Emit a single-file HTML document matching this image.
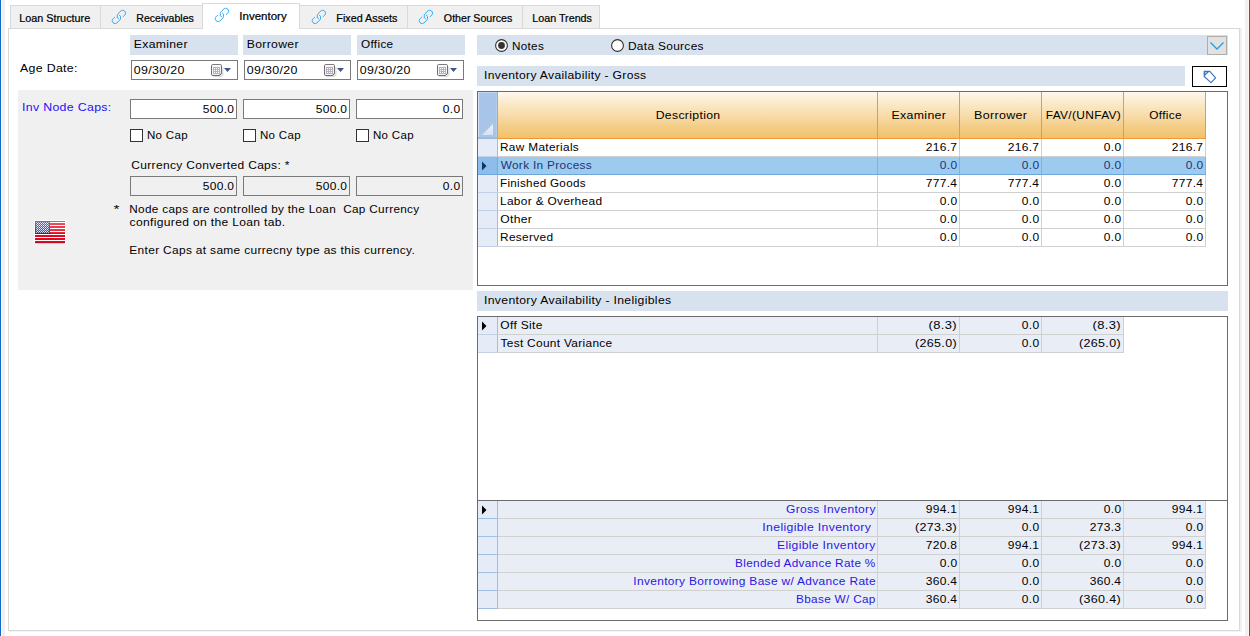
<!DOCTYPE html>
<html><head><meta charset="utf-8"><title>Inventory</title>
<style>
html,body{margin:0;padding:0}
body{width:1250px;height:636px;position:relative;overflow:hidden;background:#fff;font-family:"Liberation Sans",sans-serif;font-size:11px;color:#000}
div,span,svg{position:absolute;box-sizing:border-box}
.x{white-space:pre;font-size:11px;line-height:12px;height:12px}
.v{letter-spacing:0.3px}
.t{letter-spacing:0;-webkit-text-stroke:0.22px #000}
.n{letter-spacing:0.3px}
.band{background:#d8e2ef;height:20px}
.tab{background:#f0f0f0;border:1px solid #d9d9d9;border-bottom:none;top:5px;height:23px}
.tab.act{background:#fff;top:3px;height:26px}
.inp{background:#fff;border:1px solid #7a7a7a;width:107px;height:20px}
.inp.ro{background:#f0f0f0}
.chk{background:#fff;border:1px solid #333;width:13px;height:13px}
.grid{border:1px solid #6b6b6b;background:#fff}
.hl{height:1px;background:#d0d0d0}
.vl{width:1px;background:#d0d0d0}
#txt{left:0;top:0;width:1250px;height:636px}

</style></head>
<body>
<!-- window chrome -->
<div style="left:0;top:0;width:1px;height:636px;background:#0d6cc5"></div>
<div style="left:2px;top:0;width:3px;height:636px;background:#f0f0f0"></div>
<div style="left:1245px;top:0;width:3px;height:636px;background:#f0f0f0"></div>
<div style="left:1248px;top:0;width:1px;height:636px;background:#fdf8f0"></div>
<div style="left:1249px;top:0;width:1px;height:636px;background:#0d6cc5"></div>
<!-- tab page -->
<div style="left:1240px;top:28px;width:2px;height:604px;background:#f1f1f1"></div>
<div style="left:9px;top:631px;width:1233px;height:1px;background:#f4f4f4"></div>
<div style="left:8px;top:28px;width:1232px;height:603px;border:1px solid #d9d9d9;background:#fff"></div>
<!-- tabs -->
<div class="tab" style="left:10px;width:91px"></div>
<div class="tab" style="left:100px;width:103px"></div>
<div class="tab" style="left:299px;width:109px"></div>
<div class="tab" style="left:407px;width:116px"></div>
<div class="tab" style="left:522px;width:78px"></div>
<div class="tab act" style="left:202px;width:98px"></div>
<svg class="lnk" style="left:111px;top:9px" width="16" height="16" viewBox="0 0 16 16"><g fill="none" stroke="#12a4ff" stroke-width="0.92" stroke-linecap="round" transform="translate(7.9 7.92)">
<path d="M4.3 -0.4C5.3 -1.2 6.7 -2.4 6.7 -3.6C6.7 -5.4 5.4 -6.65 3.55 -6.65C2.9 -6.65 2.5 -6.5 2.1 -6.1L-1.2 -2.8C-1.6 -2.4 -1.6 -2 -1.6 -1.6L-1.6 0.4C-1.6 1 -1.1 1.5 -0.45 1.65"/>
<path d="M4.3 -0.4C5.3 -1.2 6.7 -2.4 6.7 -3.6C6.7 -5.4 5.4 -6.65 3.55 -6.65C2.9 -6.65 2.5 -6.5 2.1 -6.1L-1.2 -2.8C-1.6 -2.4 -1.6 -2 -1.6 -1.6L-1.6 0.4C-1.6 1 -1.1 1.5 -0.45 1.65" transform="rotate(180)"/>
</g></svg>
<svg class="lnk" style="left:214px;top:7px" width="16" height="16" viewBox="0 0 16 16"><g fill="none" stroke="#12a4ff" stroke-width="0.92" stroke-linecap="round" transform="translate(7.9 7.92)">
<path d="M4.3 -0.4C5.3 -1.2 6.7 -2.4 6.7 -3.6C6.7 -5.4 5.4 -6.65 3.55 -6.65C2.9 -6.65 2.5 -6.5 2.1 -6.1L-1.2 -2.8C-1.6 -2.4 -1.6 -2 -1.6 -1.6L-1.6 0.4C-1.6 1 -1.1 1.5 -0.45 1.65"/>
<path d="M4.3 -0.4C5.3 -1.2 6.7 -2.4 6.7 -3.6C6.7 -5.4 5.4 -6.65 3.55 -6.65C2.9 -6.65 2.5 -6.5 2.1 -6.1L-1.2 -2.8C-1.6 -2.4 -1.6 -2 -1.6 -1.6L-1.6 0.4C-1.6 1 -1.1 1.5 -0.45 1.65" transform="rotate(180)"/>
</g></svg>
<svg class="lnk" style="left:311px;top:9px" width="16" height="16" viewBox="0 0 16 16"><g fill="none" stroke="#12a4ff" stroke-width="0.92" stroke-linecap="round" transform="translate(7.9 7.92)">
<path d="M4.3 -0.4C5.3 -1.2 6.7 -2.4 6.7 -3.6C6.7 -5.4 5.4 -6.65 3.55 -6.65C2.9 -6.65 2.5 -6.5 2.1 -6.1L-1.2 -2.8C-1.6 -2.4 -1.6 -2 -1.6 -1.6L-1.6 0.4C-1.6 1 -1.1 1.5 -0.45 1.65"/>
<path d="M4.3 -0.4C5.3 -1.2 6.7 -2.4 6.7 -3.6C6.7 -5.4 5.4 -6.65 3.55 -6.65C2.9 -6.65 2.5 -6.5 2.1 -6.1L-1.2 -2.8C-1.6 -2.4 -1.6 -2 -1.6 -1.6L-1.6 0.4C-1.6 1 -1.1 1.5 -0.45 1.65" transform="rotate(180)"/>
</g></svg>
<svg class="lnk" style="left:418px;top:9px" width="16" height="16" viewBox="0 0 16 16"><g fill="none" stroke="#12a4ff" stroke-width="0.92" stroke-linecap="round" transform="translate(7.9 7.92)">
<path d="M4.3 -0.4C5.3 -1.2 6.7 -2.4 6.7 -3.6C6.7 -5.4 5.4 -6.65 3.55 -6.65C2.9 -6.65 2.5 -6.5 2.1 -6.1L-1.2 -2.8C-1.6 -2.4 -1.6 -2 -1.6 -1.6L-1.6 0.4C-1.6 1 -1.1 1.5 -0.45 1.65"/>
<path d="M4.3 -0.4C5.3 -1.2 6.7 -2.4 6.7 -3.6C6.7 -5.4 5.4 -6.65 3.55 -6.65C2.9 -6.65 2.5 -6.5 2.1 -6.1L-1.2 -2.8C-1.6 -2.4 -1.6 -2 -1.6 -1.6L-1.6 0.4C-1.6 1 -1.1 1.5 -0.45 1.65" transform="rotate(180)"/>
</g></svg>

<!-- left header bands -->
<div class="band" style="left:130px;top:35px;width:108px"></div>
<div class="band" style="left:243px;top:35px;width:108px"></div>
<div class="band" style="left:357px;top:35px;width:108px"></div>
<!-- date inputs -->
<div class="inp" style="left:131px;top:60px"></div>
<div class="inp" style="left:244px;top:60px"></div>
<div class="inp" style="left:357px;top:60px"></div>
<svg style="left:210px;top:63px" width="22" height="14" viewBox="0 0 22 14"><g>
<path d="M3 13.3h8.3l1.6-1.6V4" fill="none" stroke="#bdbdbd" stroke-width="1.2" opacity=".55"/>
<path d="M2.8 1.5h7.4q1.3 0 1.3 1.3v7.9l-1.8 1.8h-6.9q-1.3 0-1.3-1.3v-8.4q0-1.3 1.3-1.3z" fill="#f0f5fd" stroke="#746a68" stroke-width="1"/>
<path d="M2.3 2.4h8.4" stroke="#fff" stroke-width="0.9"/>
<path d="M11.5 10.7l-1.8 1.8v-1.1q0-.7 .7-.7z" fill="#5e5654"/>
<rect x="3" y="4" width="7" height="7" fill="#b3b4bc"/>
<g fill="#fff"><rect x="4" y="5" width="1" height="1"/><rect x="6" y="5" width="1" height="1"/><rect x="8" y="5" width="1" height="1"/><rect x="4" y="7" width="1" height="1"/><rect x="6" y="7" width="1" height="1"/><rect x="8" y="7" width="1" height="1"/><rect x="4" y="9" width="1" height="1"/><rect x="6" y="9" width="1" height="1"/><rect x="8" y="9" width="1" height="1"/></g>
<path d="M14 5h7l-3.5 4z" fill="#3f5686"/>
</g></svg>
<svg style="left:323px;top:63px" width="22" height="14" viewBox="0 0 22 14"><g>
<path d="M3 13.3h8.3l1.6-1.6V4" fill="none" stroke="#bdbdbd" stroke-width="1.2" opacity=".55"/>
<path d="M2.8 1.5h7.4q1.3 0 1.3 1.3v7.9l-1.8 1.8h-6.9q-1.3 0-1.3-1.3v-8.4q0-1.3 1.3-1.3z" fill="#f0f5fd" stroke="#746a68" stroke-width="1"/>
<path d="M2.3 2.4h8.4" stroke="#fff" stroke-width="0.9"/>
<path d="M11.5 10.7l-1.8 1.8v-1.1q0-.7 .7-.7z" fill="#5e5654"/>
<rect x="3" y="4" width="7" height="7" fill="#b3b4bc"/>
<g fill="#fff"><rect x="4" y="5" width="1" height="1"/><rect x="6" y="5" width="1" height="1"/><rect x="8" y="5" width="1" height="1"/><rect x="4" y="7" width="1" height="1"/><rect x="6" y="7" width="1" height="1"/><rect x="8" y="7" width="1" height="1"/><rect x="4" y="9" width="1" height="1"/><rect x="6" y="9" width="1" height="1"/><rect x="8" y="9" width="1" height="1"/></g>
<path d="M14 5h7l-3.5 4z" fill="#3f5686"/>
</g></svg>
<svg style="left:436px;top:63px" width="22" height="14" viewBox="0 0 22 14"><g>
<path d="M3 13.3h8.3l1.6-1.6V4" fill="none" stroke="#bdbdbd" stroke-width="1.2" opacity=".55"/>
<path d="M2.8 1.5h7.4q1.3 0 1.3 1.3v7.9l-1.8 1.8h-6.9q-1.3 0-1.3-1.3v-8.4q0-1.3 1.3-1.3z" fill="#f0f5fd" stroke="#746a68" stroke-width="1"/>
<path d="M2.3 2.4h8.4" stroke="#fff" stroke-width="0.9"/>
<path d="M11.5 10.7l-1.8 1.8v-1.1q0-.7 .7-.7z" fill="#5e5654"/>
<rect x="3" y="4" width="7" height="7" fill="#b3b4bc"/>
<g fill="#fff"><rect x="4" y="5" width="1" height="1"/><rect x="6" y="5" width="1" height="1"/><rect x="8" y="5" width="1" height="1"/><rect x="4" y="7" width="1" height="1"/><rect x="6" y="7" width="1" height="1"/><rect x="8" y="7" width="1" height="1"/><rect x="4" y="9" width="1" height="1"/><rect x="6" y="9" width="1" height="1"/><rect x="8" y="9" width="1" height="1"/></g>
<path d="M14 5h7l-3.5 4z" fill="#3f5686"/>
</g></svg>

<!-- gray panel -->
<div style="left:18px;top:90px;width:455px;height:200px;background:#f0f0f0"></div>
<div class="inp" style="left:130px;top:99px"></div>
<div class="inp" style="left:243px;top:99px"></div>
<div class="inp" style="left:356px;top:99px"></div>
<div class="chk" style="left:130px;top:129px"></div>
<div class="chk" style="left:243px;top:129px"></div>
<div class="chk" style="left:356px;top:129px"></div>
<div class="inp ro" style="left:130px;top:176px"></div>
<div class="inp ro" style="left:243px;top:176px"></div>
<div class="inp ro" style="left:356px;top:176px"></div>
<!-- flag -->
<svg style="left:33px;top:219px" width="34" height="27" viewBox="0 0 34 27">
<defs><pattern id="st" width="2" height="2" patternUnits="userSpaceOnUse"><rect width="2" height="2" fill="#2a3080"/><rect x="0" y="0" width="1" height="1" fill="#eceef8"/><rect x="1" y="1" width="1" height="1" fill="#b4b9dc"/></pattern>
<linearGradient id="fg" x1="0" y1="0" x2="0" y2="1"><stop offset="0" stop-color="#fff" stop-opacity=".32"/><stop offset="1" stop-color="#fff" stop-opacity=".12"/></linearGradient></defs>
<rect x="1" y="1" width="32" height="24.4" rx="1.2" fill="#fff" opacity=".85"/>
<rect x="2" y="24" width="30" height="1.2" fill="#9a9a9a" opacity=".45"/>
<rect x="2" y="2" width="30" height="22" fill="#fff"/>
<g fill="#df0a20"><rect x="2" y="2" width="30" height="1"/><rect x="2" y="4" width="30" height="2"/><rect x="2" y="7" width="30" height="2"/><rect x="2" y="10" width="30" height="2"/><rect x="2" y="13" width="30" height="2"/><rect x="2" y="16" width="30" height="2"/><rect x="2" y="19" width="30" height="2"/><rect x="2" y="22" width="30" height="2"/></g>
<rect x="2" y="2" width="15" height="13" fill="#2a3080"/>
<rect x="3" y="3" width="13" height="11" fill="url(#st)"/>
<rect x="2" y="2" width="30" height="12" fill="url(#fg)"/>
<rect x="2" y="23" width="30" height="1" fill="#000" opacity=".1"/>
</svg>
<!-- right panel -->
<div class="band" style="left:477px;top:35px;width:751px"></div>
<div style="left:1207px;top:36px;width:20px;height:19px;background:#e1e1e1;border:1px solid #adadad"></div>
<svg style="left:1207px;top:36px" width="20" height="19" viewBox="0 0 20 19"><path d="M3.5 6.5L10 13L16.5 6.5" fill="none" stroke="#1ba1e8" stroke-width="1.3"/></svg>
<svg style="left:495px;top:39px" width="13" height="13" viewBox="0 0 13 13"><circle cx="6.5" cy="6.5" r="5.9" fill="#fff" stroke="#303030" stroke-width="1.12"/><circle cx="6.5" cy="6.5" r="3.4" fill="#333"/></svg>
<svg style="left:611px;top:39px" width="13" height="13" viewBox="0 0 13 13"><circle cx="6.5" cy="6.5" r="5.9" fill="#fff" stroke="#303030" stroke-width="1.12"/></svg>
<div class="band" style="left:477px;top:66px;width:708px"></div>
<div style="left:1192px;top:66px;width:35px;height:21px;background:#fff;border:1px solid #000"></div>
<svg style="left:1201px;top:69px" width="18" height="16" viewBox="0 0 18 16"><path d="M3.2 2.3L8.8 2.3L14.6 8.8L10 13.7L3.2 7.5z" fill="#fff" stroke="#3a76be" stroke-width="1.15" stroke-linejoin="round"/><path d="M3.2 2.3L8.8 2.3L3.2 7.5z" fill="#3a76be"/><circle cx="4.9" cy="3.8" r="0.75" fill="#e8f0fa"/></svg>
<div class="band" style="left:477px;top:291px;width:751px"></div>
<div class="grid" style="left:477px;top:91px;width:751px;height:195px"></div>
<div style="left:498px;top:92px;width:708px;height:46px;background:linear-gradient(#fef8ee 0%,#fbe9c9 25%,#f8dcab 50%,#f4ce88 75%,#f0c168 100%)"></div>
<div style="left:498px;top:138px;width:708px;height:1px;background:#f29638"></div>
<div style="left:877px;top:92px;width:1px;height:47px;background:#f29638"></div>
<div style="left:959px;top:92px;width:1px;height:47px;background:#f29638"></div>
<div style="left:1041px;top:92px;width:1px;height:47px;background:#f29638"></div>
<div style="left:1123px;top:92px;width:1px;height:47px;background:#f29638"></div>
<div style="left:1205px;top:92px;width:1px;height:47px;background:#f29638"></div>
<div style="left:478px;top:92px;width:20px;height:47px;background:#a9c4e9"></div>
<div style="left:478px;top:92px;width:1px;height:46px;background:#d3e1f5"></div>
<div style="left:479px;top:92px;width:17px;height:1px;background:#c4d6f0"></div>
<div style="left:496px;top:92px;width:1px;height:46px;background:#b4cbe9"></div>
<div style="left:497px;top:92px;width:1px;height:47px;background:#8fafd6"></div>
<div style="left:478px;top:137px;width:19px;height:1px;background:#a6bedb"></div>
<div style="left:478px;top:138px;width:20px;height:1px;background:#9db6d5"></div>
<svg style="left:482px;top:124px" width="12" height="12" viewBox="0 0 12 12"><defs><linearGradient id="tg" x1="0" y1="0" x2="0" y2="1"><stop offset="0" stop-color="#eef3fb"/><stop offset="1" stop-color="#d4e1f4"/></linearGradient></defs><path d="M0 11L11 11L11 0z" fill="url(#tg)"/></svg>
<div style="left:478px;top:139px;width:19px;height:17px;background:#e6ecf7"></div>
<div style="left:497px;top:139px;width:1px;height:18px;background:#a3bcdc"></div>
<div style="left:478px;top:156px;width:20px;height:1px;background:#c3cfe2"></div>
<div style="left:498px;top:156px;width:708px;height:1px;background:#d4cfcf"></div>
<div style="left:877px;top:139px;width:1px;height:17px;background:#d0d0d0"></div>
<div style="left:959px;top:139px;width:1px;height:17px;background:#d0d0d0"></div>
<div style="left:1041px;top:139px;width:1px;height:17px;background:#d0d0d0"></div>
<div style="left:1123px;top:139px;width:1px;height:17px;background:#d0d0d0"></div>
<div style="left:1205px;top:139px;width:1px;height:17px;background:#d0d0d0"></div>
<div style="left:478px;top:157px;width:19px;height:17px;background:#8dbdea"></div>
<div style="left:497px;top:157px;width:1px;height:18px;background:#7aa8d8"></div>
<div style="left:498px;top:157px;width:708px;height:17px;background:#9dcbef"></div>
<div style="left:478px;top:174px;width:20px;height:1px;background:#6ea6dc"></div>
<div style="left:498px;top:174px;width:708px;height:1px;background:#6ea6dc"></div>
<div style="left:877px;top:157px;width:1px;height:17px;background:#7fb0de"></div>
<div style="left:959px;top:157px;width:1px;height:17px;background:#7fb0de"></div>
<div style="left:1041px;top:157px;width:1px;height:17px;background:#7fb0de"></div>
<div style="left:1123px;top:157px;width:1px;height:17px;background:#7fb0de"></div>
<div style="left:1205px;top:157px;width:1px;height:17px;background:#7fb0de"></div>
<div style="left:478px;top:175px;width:19px;height:17px;background:#e6ecf7"></div>
<div style="left:497px;top:175px;width:1px;height:18px;background:#a3bcdc"></div>
<div style="left:478px;top:192px;width:20px;height:1px;background:#c3cfe2"></div>
<div style="left:498px;top:192px;width:708px;height:1px;background:#d0d0d0"></div>
<div style="left:877px;top:175px;width:1px;height:17px;background:#d0d0d0"></div>
<div style="left:959px;top:175px;width:1px;height:17px;background:#d0d0d0"></div>
<div style="left:1041px;top:175px;width:1px;height:17px;background:#d0d0d0"></div>
<div style="left:1123px;top:175px;width:1px;height:17px;background:#d0d0d0"></div>
<div style="left:1205px;top:175px;width:1px;height:17px;background:#d0d0d0"></div>
<div style="left:478px;top:193px;width:19px;height:17px;background:#e6ecf7"></div>
<div style="left:497px;top:193px;width:1px;height:18px;background:#a3bcdc"></div>
<div style="left:478px;top:210px;width:20px;height:1px;background:#c3cfe2"></div>
<div style="left:498px;top:210px;width:708px;height:1px;background:#d0d0d0"></div>
<div style="left:877px;top:193px;width:1px;height:17px;background:#d0d0d0"></div>
<div style="left:959px;top:193px;width:1px;height:17px;background:#d0d0d0"></div>
<div style="left:1041px;top:193px;width:1px;height:17px;background:#d0d0d0"></div>
<div style="left:1123px;top:193px;width:1px;height:17px;background:#d0d0d0"></div>
<div style="left:1205px;top:193px;width:1px;height:17px;background:#d0d0d0"></div>
<div style="left:478px;top:211px;width:19px;height:17px;background:#e6ecf7"></div>
<div style="left:497px;top:211px;width:1px;height:18px;background:#a3bcdc"></div>
<div style="left:478px;top:228px;width:20px;height:1px;background:#c3cfe2"></div>
<div style="left:498px;top:228px;width:708px;height:1px;background:#d0d0d0"></div>
<div style="left:877px;top:211px;width:1px;height:17px;background:#d0d0d0"></div>
<div style="left:959px;top:211px;width:1px;height:17px;background:#d0d0d0"></div>
<div style="left:1041px;top:211px;width:1px;height:17px;background:#d0d0d0"></div>
<div style="left:1123px;top:211px;width:1px;height:17px;background:#d0d0d0"></div>
<div style="left:1205px;top:211px;width:1px;height:17px;background:#d0d0d0"></div>
<div style="left:478px;top:229px;width:19px;height:17px;background:#e6ecf7"></div>
<div style="left:497px;top:229px;width:1px;height:18px;background:#a3bcdc"></div>
<div style="left:478px;top:246px;width:20px;height:1px;background:#c3cfe2"></div>
<div style="left:498px;top:246px;width:708px;height:1px;background:#d0d0d0"></div>
<div style="left:877px;top:229px;width:1px;height:17px;background:#d0d0d0"></div>
<div style="left:959px;top:229px;width:1px;height:17px;background:#d0d0d0"></div>
<div style="left:1041px;top:229px;width:1px;height:17px;background:#d0d0d0"></div>
<div style="left:1123px;top:229px;width:1px;height:17px;background:#d0d0d0"></div>
<div style="left:1205px;top:229px;width:1px;height:17px;background:#d0d0d0"></div>
<svg style="left:482px;top:161px" width="6" height="10" viewBox="0 0 6 10"><path d="M0 0.5L4.5 5L0 9.5z" fill="#0b3766"/></svg>
<div class="grid" style="left:477px;top:316px;width:751px;height:305px"></div>
<div style="left:478px;top:317px;width:19px;height:17px;background:#e6ecf7"></div>
<div style="left:497px;top:317px;width:1px;height:18px;background:#a3bcdc"></div>
<div style="left:498px;top:317px;width:626px;height:17px;background:#e9edf6"></div>
<div style="left:478px;top:334px;width:20px;height:1px;background:#c3cfe2"></div>
<div style="left:498px;top:334px;width:626px;height:1px;background:#d0d0d0"></div>
<div style="left:877px;top:317px;width:1px;height:17px;background:#d0d0d0"></div>
<div style="left:959px;top:317px;width:1px;height:17px;background:#d0d0d0"></div>
<div style="left:1041px;top:317px;width:1px;height:17px;background:#d0d0d0"></div>
<div style="left:1123px;top:317px;width:1px;height:17px;background:#d0d0d0"></div>
<div style="left:478px;top:335px;width:19px;height:17px;background:#e6ecf7"></div>
<div style="left:497px;top:335px;width:1px;height:18px;background:#a3bcdc"></div>
<div style="left:498px;top:335px;width:626px;height:17px;background:#e9edf6"></div>
<div style="left:478px;top:352px;width:20px;height:1px;background:#c3cfe2"></div>
<div style="left:498px;top:352px;width:626px;height:1px;background:#d0d0d0"></div>
<div style="left:877px;top:335px;width:1px;height:17px;background:#d0d0d0"></div>
<div style="left:959px;top:335px;width:1px;height:17px;background:#d0d0d0"></div>
<div style="left:1041px;top:335px;width:1px;height:17px;background:#d0d0d0"></div>
<div style="left:1123px;top:335px;width:1px;height:17px;background:#d0d0d0"></div>
<svg style="left:482px;top:321px" width="6" height="10" viewBox="0 0 6 10"><path d="M0 0.5L4.5 5L0 9.5z" fill="#000"/></svg>
<div style="left:478px;top:500px;width:749px;height:1px;background:#6b6b6b"></div>
<div style="left:478px;top:501px;width:19px;height:17px;background:#e6ecf7"></div>
<div style="left:497px;top:501px;width:1px;height:18px;background:#a3bcdc"></div>
<div style="left:498px;top:501px;width:708px;height:17px;background:#e9edf6"></div>
<div style="left:478px;top:518px;width:20px;height:1px;background:#9fc0e4"></div>
<div style="left:498px;top:518px;width:708px;height:1px;background:#d0d0d0"></div>
<div style="left:877px;top:501px;width:1px;height:17px;background:#d0d0d0"></div>
<div style="left:959px;top:501px;width:1px;height:17px;background:#d0d0d0"></div>
<div style="left:1041px;top:501px;width:1px;height:17px;background:#d0d0d0"></div>
<div style="left:1123px;top:501px;width:1px;height:17px;background:#d0d0d0"></div>
<div style="left:1205px;top:501px;width:1px;height:17px;background:#d0d0d0"></div>
<div style="left:478px;top:519px;width:19px;height:17px;background:#e6ecf7"></div>
<div style="left:497px;top:519px;width:1px;height:18px;background:#a3bcdc"></div>
<div style="left:498px;top:519px;width:708px;height:17px;background:#e9edf6"></div>
<div style="left:478px;top:536px;width:20px;height:1px;background:#9fc0e4"></div>
<div style="left:498px;top:536px;width:708px;height:1px;background:#d0d0d0"></div>
<div style="left:877px;top:519px;width:1px;height:17px;background:#d0d0d0"></div>
<div style="left:959px;top:519px;width:1px;height:17px;background:#d0d0d0"></div>
<div style="left:1041px;top:519px;width:1px;height:17px;background:#d0d0d0"></div>
<div style="left:1123px;top:519px;width:1px;height:17px;background:#d0d0d0"></div>
<div style="left:1205px;top:519px;width:1px;height:17px;background:#d0d0d0"></div>
<div style="left:478px;top:537px;width:19px;height:17px;background:#e6ecf7"></div>
<div style="left:497px;top:537px;width:1px;height:18px;background:#a3bcdc"></div>
<div style="left:498px;top:537px;width:708px;height:17px;background:#e9edf6"></div>
<div style="left:478px;top:554px;width:20px;height:1px;background:#9fc0e4"></div>
<div style="left:498px;top:554px;width:708px;height:1px;background:#d0d0d0"></div>
<div style="left:877px;top:537px;width:1px;height:17px;background:#d0d0d0"></div>
<div style="left:959px;top:537px;width:1px;height:17px;background:#d0d0d0"></div>
<div style="left:1041px;top:537px;width:1px;height:17px;background:#d0d0d0"></div>
<div style="left:1123px;top:537px;width:1px;height:17px;background:#d0d0d0"></div>
<div style="left:1205px;top:537px;width:1px;height:17px;background:#d0d0d0"></div>
<div style="left:478px;top:555px;width:19px;height:17px;background:#e6ecf7"></div>
<div style="left:497px;top:555px;width:1px;height:18px;background:#a3bcdc"></div>
<div style="left:498px;top:555px;width:708px;height:17px;background:#e9edf6"></div>
<div style="left:478px;top:572px;width:20px;height:1px;background:#9fc0e4"></div>
<div style="left:498px;top:572px;width:708px;height:1px;background:#d0d0d0"></div>
<div style="left:877px;top:555px;width:1px;height:17px;background:#d0d0d0"></div>
<div style="left:959px;top:555px;width:1px;height:17px;background:#d0d0d0"></div>
<div style="left:1041px;top:555px;width:1px;height:17px;background:#d0d0d0"></div>
<div style="left:1123px;top:555px;width:1px;height:17px;background:#d0d0d0"></div>
<div style="left:1205px;top:555px;width:1px;height:17px;background:#d0d0d0"></div>
<div style="left:478px;top:573px;width:19px;height:17px;background:#e6ecf7"></div>
<div style="left:497px;top:573px;width:1px;height:18px;background:#a3bcdc"></div>
<div style="left:498px;top:573px;width:708px;height:17px;background:#e9edf6"></div>
<div style="left:478px;top:590px;width:20px;height:1px;background:#9fc0e4"></div>
<div style="left:498px;top:590px;width:708px;height:1px;background:#d0d0d0"></div>
<div style="left:877px;top:573px;width:1px;height:17px;background:#d0d0d0"></div>
<div style="left:959px;top:573px;width:1px;height:17px;background:#d0d0d0"></div>
<div style="left:1041px;top:573px;width:1px;height:17px;background:#d0d0d0"></div>
<div style="left:1123px;top:573px;width:1px;height:17px;background:#d0d0d0"></div>
<div style="left:1205px;top:573px;width:1px;height:17px;background:#d0d0d0"></div>
<div style="left:478px;top:591px;width:19px;height:17px;background:#e6ecf7"></div>
<div style="left:497px;top:591px;width:1px;height:18px;background:#a3bcdc"></div>
<div style="left:498px;top:591px;width:708px;height:17px;background:#e9edf6"></div>
<div style="left:478px;top:608px;width:20px;height:1px;background:#9fc0e4"></div>
<div style="left:498px;top:608px;width:708px;height:1px;background:#d0d0d0"></div>
<div style="left:877px;top:591px;width:1px;height:17px;background:#d0d0d0"></div>
<div style="left:959px;top:591px;width:1px;height:17px;background:#d0d0d0"></div>
<div style="left:1041px;top:591px;width:1px;height:17px;background:#d0d0d0"></div>
<div style="left:1123px;top:591px;width:1px;height:17px;background:#d0d0d0"></div>
<div style="left:1205px;top:591px;width:1px;height:17px;background:#d0d0d0"></div>
<svg style="left:482px;top:505px" width="6" height="10" viewBox="0 0 6 10"><path d="M0 0.5L4.5 5L0 9.5z" fill="#000"/></svg>
<div id="txt">
<span class="x t" style="left:19px;top:12px;transform:translateX(0.3px) scaleX(0.9817);transform-origin:0 0">Loan Structure</span>
<span class="x t" style="left:136px;top:12px;transform:translateX(0.3px) scaleX(0.9597);transform-origin:0 0">Receivables</span>
<span class="x t" style="left:239px;top:10px;transform:translateX(0.27px) scaleX(1.0473);transform-origin:0 0">Inventory</span>
<span class="x t" style="left:336px;top:12px;transform:translateX(0.3px) scaleX(0.9812);transform-origin:0 0">Fixed Assets</span>
<span class="x t" style="left:443px;top:12px;transform:translateX(0.87px) scaleX(0.9652);transform-origin:0 0">Other Sources</span>
<span class="x t" style="left:532px;top:12px;transform:translateX(0.3px) scaleX(0.975);transform-origin:0 0">Loan Trends</span>
<span class="x v" style="left:133px;top:38px;transform:translateX(0.77px) scaleX(1.1066);transform-origin:0 0">Examiner</span>
<span class="x v" style="left:246px;top:38px;transform:translateX(0.68px) scaleX(1.1082);transform-origin:0 0">Borrower</span>
<span class="x v" style="left:361px;top:38px;transform:scaleX(1.0711);transform-origin:0 0">Office</span>
<span class="x v" style="left:20px;top:62px;transform:scaleX(1.12);transform-origin:0 0">Age Date:</span>
<span class="x v" style="left:133px;top:64px;transform:translateX(0.76px) scaleX(1.1275);transform-origin:0 0">09/30/20</span>
<span class="x v" style="left:246px;top:64px;transform:translateX(0.76px) scaleX(1.1275);transform-origin:0 0">09/30/20</span>
<span class="x v" style="left:359px;top:64px;transform:translateX(0.76px) scaleX(1.1275);transform-origin:0 0">09/30/20</span>
<span class="x v" style="left:22px;top:101px;transform:scaleX(1.12);transform-origin:0 0;color:#2410fa">Inv Node Caps:</span>
<span class="x n" style="right:1016px;top:103px;transform:translateX(0.33px) scaleX(1.09);transform-origin:100% 0">500.0</span>
<span class="x n" style="right:1016px;top:180px;transform:translateX(0.33px) scaleX(1.09);transform-origin:100% 0">500.0</span>
<span class="x n" style="right:903px;top:103px;transform:translateX(0.33px) scaleX(1.09);transform-origin:100% 0">500.0</span>
<span class="x n" style="right:903px;top:180px;transform:translateX(0.33px) scaleX(1.09);transform-origin:100% 0">500.0</span>
<span class="x n" style="right:790px;top:103px;transform:translateX(0.33px) scaleX(1.09);transform-origin:100% 0">0.0</span>
<span class="x n" style="right:790px;top:180px;transform:translateX(0.33px) scaleX(1.09);transform-origin:100% 0">0.0</span>
<span class="x v" style="left:146px;top:129px;transform:translateX(0.97px) scaleX(1.0475);transform-origin:0 0">No Cap</span>
<span class="x v" style="left:259px;top:129px;transform:translateX(0.97px) scaleX(1.0475);transform-origin:0 0">No Cap</span>
<span class="x v" style="left:372px;top:129px;transform:translateX(0.97px) scaleX(1.0475);transform-origin:0 0">No Cap</span>
<span class="x v" style="left:131px;top:159px;transform:translateX(0.32px) scaleX(1.0899);transform-origin:0 0">Currency Converted Caps: *</span>
<span class="x v" style="left:113px;top:203px;transform:translateX(0.5px) scaleX(1.3912);transform-origin:0 0">*</span>
<span class="x v" style="left:129px;top:203px;transform:translateX(0.3px) scaleX(1.0676);transform-origin:0 0">Node caps are controlled by the Loan  Cap Currency</span>
<span class="x v" style="left:129px;top:216px;transform:translateX(0.6px) scaleX(1.0977);transform-origin:0 0">configured on the Loan tab.</span>
<span class="x v" style="left:129px;top:244px;transform:translateX(0.3px) scaleX(1.0843);transform-origin:0 0">Enter Caps at same currecny type as this currency.</span>
<span class="x v" style="left:511px;top:40px;transform:translateX(0.91px) scaleX(1.0635);transform-origin:0 0">Notes</span>
<span class="x v" style="left:627px;top:40px;transform:translateX(0.91px) scaleX(1.0808);transform-origin:0 0">Data Sources</span>
<span class="x v" style="left:484px;top:69px;transform:scaleX(1.101);transform-origin:0 0">Inventory Availability - Gross</span>
<span class="x v" style="left:484px;top:294px;transform:scaleX(1.1094);transform-origin:0 0">Inventory Availability - Ineligibles</span>
<span class="x v" style="left:655px;top:109px;transform:translateX(0.69px) scaleX(1.1108);transform-origin:0 0">Description</span>
<span class="x v" style="left:891px;top:109px;transform:translateX(0.5px) scaleX(1.12);transform-origin:0 0">Examiner</span>
<span class="x v" style="left:974px;top:109px;transform:scaleX(1.132);transform-origin:0 0">Borrower</span>
<span class="x v" style="left:1045px;top:109px;transform:translateX(0.68px) scaleX(1.0854);transform-origin:0 0">FAV/(UNFAV)</span>
<span class="x v" style="left:1149px;top:109px;transform:translateX(0.26px) scaleX(1.0778);transform-origin:0 0">Office</span>
<span class="x v" style="left:500px;top:141px;transform:scaleX(1.0744);transform-origin:0 0">Raw Materials</span>
<span class="x n" style="right:293px;top:141px;transform:translateX(0.33px) scaleX(1.09);transform-origin:100% 0">216.7</span>
<span class="x n" style="right:211px;top:141px;transform:translateX(0.33px) scaleX(1.09);transform-origin:100% 0">216.7</span>
<span class="x n" style="right:129px;top:141px;transform:translateX(0.33px) scaleX(1.09);transform-origin:100% 0">0.0</span>
<span class="x n" style="right:47px;top:141px;transform:translateX(0.33px) scaleX(1.09);transform-origin:100% 0">216.7</span>
<span class="x v" style="left:500px;top:159px;transform:translateX(0.7px) scaleX(1.0753);transform-origin:0 0;color:#1c3478">Work In Process</span>
<span class="x n" style="right:293px;top:159px;transform:translateX(0.33px) scaleX(1.09);transform-origin:100% 0;color:#1c3478">0.0</span>
<span class="x n" style="right:211px;top:159px;transform:translateX(0.33px) scaleX(1.09);transform-origin:100% 0;color:#1c3478">0.0</span>
<span class="x n" style="right:129px;top:159px;transform:translateX(0.33px) scaleX(1.09);transform-origin:100% 0;color:#1c3478">0.0</span>
<span class="x n" style="right:47px;top:159px;transform:translateX(0.33px) scaleX(1.09);transform-origin:100% 0;color:#1c3478">0.0</span>
<span class="x v" style="left:500px;top:177px;transform:scaleX(1.0565);transform-origin:0 0">Finished Goods</span>
<span class="x n" style="right:293px;top:177px;transform:translateX(0.33px) scaleX(1.09);transform-origin:100% 0">777.4</span>
<span class="x n" style="right:211px;top:177px;transform:translateX(0.33px) scaleX(1.09);transform-origin:100% 0">777.4</span>
<span class="x n" style="right:129px;top:177px;transform:translateX(0.33px) scaleX(1.09);transform-origin:100% 0">0.0</span>
<span class="x n" style="right:47px;top:177px;transform:translateX(0.33px) scaleX(1.09);transform-origin:100% 0">777.4</span>
<span class="x v" style="left:500px;top:195px;transform:scaleX(1.0808);transform-origin:0 0">Labor &amp; Overhead</span>
<span class="x n" style="right:293px;top:195px;transform:translateX(0.33px) scaleX(1.09);transform-origin:100% 0">0.0</span>
<span class="x n" style="right:211px;top:195px;transform:translateX(0.33px) scaleX(1.09);transform-origin:100% 0">0.0</span>
<span class="x n" style="right:129px;top:195px;transform:translateX(0.33px) scaleX(1.09);transform-origin:100% 0">0.0</span>
<span class="x n" style="right:47px;top:195px;transform:translateX(0.33px) scaleX(1.09);transform-origin:100% 0">0.0</span>
<span class="x v" style="left:500px;top:213px;transform:translateX(0.26px) scaleX(1.101);transform-origin:0 0">Other</span>
<span class="x n" style="right:293px;top:213px;transform:translateX(0.33px) scaleX(1.09);transform-origin:100% 0">0.0</span>
<span class="x n" style="right:211px;top:213px;transform:translateX(0.33px) scaleX(1.09);transform-origin:100% 0">0.0</span>
<span class="x n" style="right:129px;top:213px;transform:translateX(0.33px) scaleX(1.09);transform-origin:100% 0">0.0</span>
<span class="x n" style="right:47px;top:213px;transform:translateX(0.33px) scaleX(1.09);transform-origin:100% 0">0.0</span>
<span class="x v" style="left:500px;top:231px;transform:scaleX(1.0783);transform-origin:0 0">Reserved</span>
<span class="x n" style="right:293px;top:231px;transform:translateX(0.33px) scaleX(1.09);transform-origin:100% 0">0.0</span>
<span class="x n" style="right:211px;top:231px;transform:translateX(0.33px) scaleX(1.09);transform-origin:100% 0">0.0</span>
<span class="x n" style="right:129px;top:231px;transform:translateX(0.33px) scaleX(1.09);transform-origin:100% 0">0.0</span>
<span class="x n" style="right:47px;top:231px;transform:translateX(0.33px) scaleX(1.09);transform-origin:100% 0">0.0</span>
<span class="x v" style="left:500px;top:319px;transform:translateX(0.35px) scaleX(1.0901);transform-origin:0 0">Off Site</span>
<span class="x n" style="right:294px;top:319px;transform:translateX(0.76px) scaleX(1.1758);transform-origin:100% 0">(8.3)</span>
<span class="x n" style="right:211px;top:319px;transform:translateX(0.33px) scaleX(1.09);transform-origin:100% 0">0.0</span>
<span class="x n" style="right:130px;top:319px;transform:translateX(0.76px) scaleX(1.1758);transform-origin:100% 0">(8.3)</span>
<span class="x v" style="left:500px;top:337px;transform:translateX(0.47px) scaleX(1.0778);transform-origin:0 0">Test Count Variance</span>
<span class="x n" style="right:294px;top:337px;transform:translateX(0.96px) scaleX(1.1347);transform-origin:100% 0">(265.0)</span>
<span class="x n" style="right:211px;top:337px;transform:translateX(0.33px) scaleX(1.09);transform-origin:100% 0">0.0</span>
<span class="x n" style="right:130px;top:337px;transform:translateX(0.96px) scaleX(1.1347);transform-origin:100% 0">(265.0)</span>
<span class="x v" style="left:786px;top:503px;transform:scaleX(1.093);transform-origin:0 0;color:#2a18e0">Gross Inventory</span>
<span class="x n" style="right:293px;top:503px;transform:translateX(0.33px) scaleX(1.09);transform-origin:100% 0">994.1</span>
<span class="x n" style="right:211px;top:503px;transform:translateX(0.33px) scaleX(1.09);transform-origin:100% 0">994.1</span>
<span class="x n" style="right:129px;top:503px;transform:translateX(0.33px) scaleX(1.09);transform-origin:100% 0">0.0</span>
<span class="x n" style="right:47px;top:503px;transform:translateX(0.33px) scaleX(1.09);transform-origin:100% 0">994.1</span>
<span class="x v" style="left:762px;top:521px;transform:translateX(0.37px) scaleX(1.1134);transform-origin:0 0;color:#2a18e0">Ineligible Inventory</span>
<span class="x n" style="right:294px;top:521px;transform:translateX(0.96px) scaleX(1.1347);transform-origin:100% 0">(273.3)</span>
<span class="x n" style="right:211px;top:521px;transform:translateX(0.33px) scaleX(1.09);transform-origin:100% 0">0.0</span>
<span class="x n" style="right:129px;top:521px;transform:translateX(0.33px) scaleX(1.09);transform-origin:100% 0">273.3</span>
<span class="x n" style="right:47px;top:521px;transform:translateX(0.33px) scaleX(1.09);transform-origin:100% 0">0.0</span>
<span class="x v" style="left:777px;top:539px;transform:translateX(0.07px) scaleX(1.1046);transform-origin:0 0;color:#2a18e0">Eligible Inventory</span>
<span class="x n" style="right:293px;top:539px;transform:translateX(0.33px) scaleX(1.09);transform-origin:100% 0">720.8</span>
<span class="x n" style="right:211px;top:539px;transform:translateX(0.33px) scaleX(1.09);transform-origin:100% 0">994.1</span>
<span class="x n" style="right:130px;top:539px;transform:translateX(0.96px) scaleX(1.1347);transform-origin:100% 0">(273.3)</span>
<span class="x n" style="right:47px;top:539px;transform:translateX(0.33px) scaleX(1.09);transform-origin:100% 0">994.1</span>
<span class="x v" style="left:735px;top:557px;transform:translateX(0.07px) scaleX(1.0703);transform-origin:0 0;color:#2a18e0">Blended Advance Rate %</span>
<span class="x n" style="right:293px;top:557px;transform:translateX(0.33px) scaleX(1.09);transform-origin:100% 0">0.0</span>
<span class="x n" style="right:211px;top:557px;transform:translateX(0.33px) scaleX(1.09);transform-origin:100% 0">0.0</span>
<span class="x n" style="right:129px;top:557px;transform:translateX(0.33px) scaleX(1.09);transform-origin:100% 0">0.0</span>
<span class="x n" style="right:47px;top:557px;transform:translateX(0.33px) scaleX(1.09);transform-origin:100% 0">0.0</span>
<span class="x v" style="left:633px;top:575px;transform:translateX(0.37px) scaleX(1.0851);transform-origin:0 0;color:#2a18e0">Inventory Borrowing Base w/ Advance Rate</span>
<span class="x n" style="right:293px;top:575px;transform:translateX(0.33px) scaleX(1.09);transform-origin:100% 0">360.4</span>
<span class="x n" style="right:211px;top:575px;transform:translateX(0.33px) scaleX(1.09);transform-origin:100% 0">0.0</span>
<span class="x n" style="right:129px;top:575px;transform:translateX(0.33px) scaleX(1.09);transform-origin:100% 0">360.4</span>
<span class="x n" style="right:47px;top:575px;transform:translateX(0.33px) scaleX(1.09);transform-origin:100% 0">0.0</span>
<span class="x v" style="left:796px;top:593px;transform:translateX(0.07px) scaleX(1.0682);transform-origin:0 0;color:#2a18e0">Bbase W/ Cap</span>
<span class="x n" style="right:293px;top:593px;transform:translateX(0.33px) scaleX(1.09);transform-origin:100% 0">360.4</span>
<span class="x n" style="right:211px;top:593px;transform:translateX(0.33px) scaleX(1.09);transform-origin:100% 0">0.0</span>
<span class="x n" style="right:130px;top:593px;transform:translateX(0.96px) scaleX(1.1347);transform-origin:100% 0">(360.4)</span>
<span class="x n" style="right:47px;top:593px;transform:translateX(0.33px) scaleX(1.09);transform-origin:100% 0">0.0</span>
</div>
</body></html>
